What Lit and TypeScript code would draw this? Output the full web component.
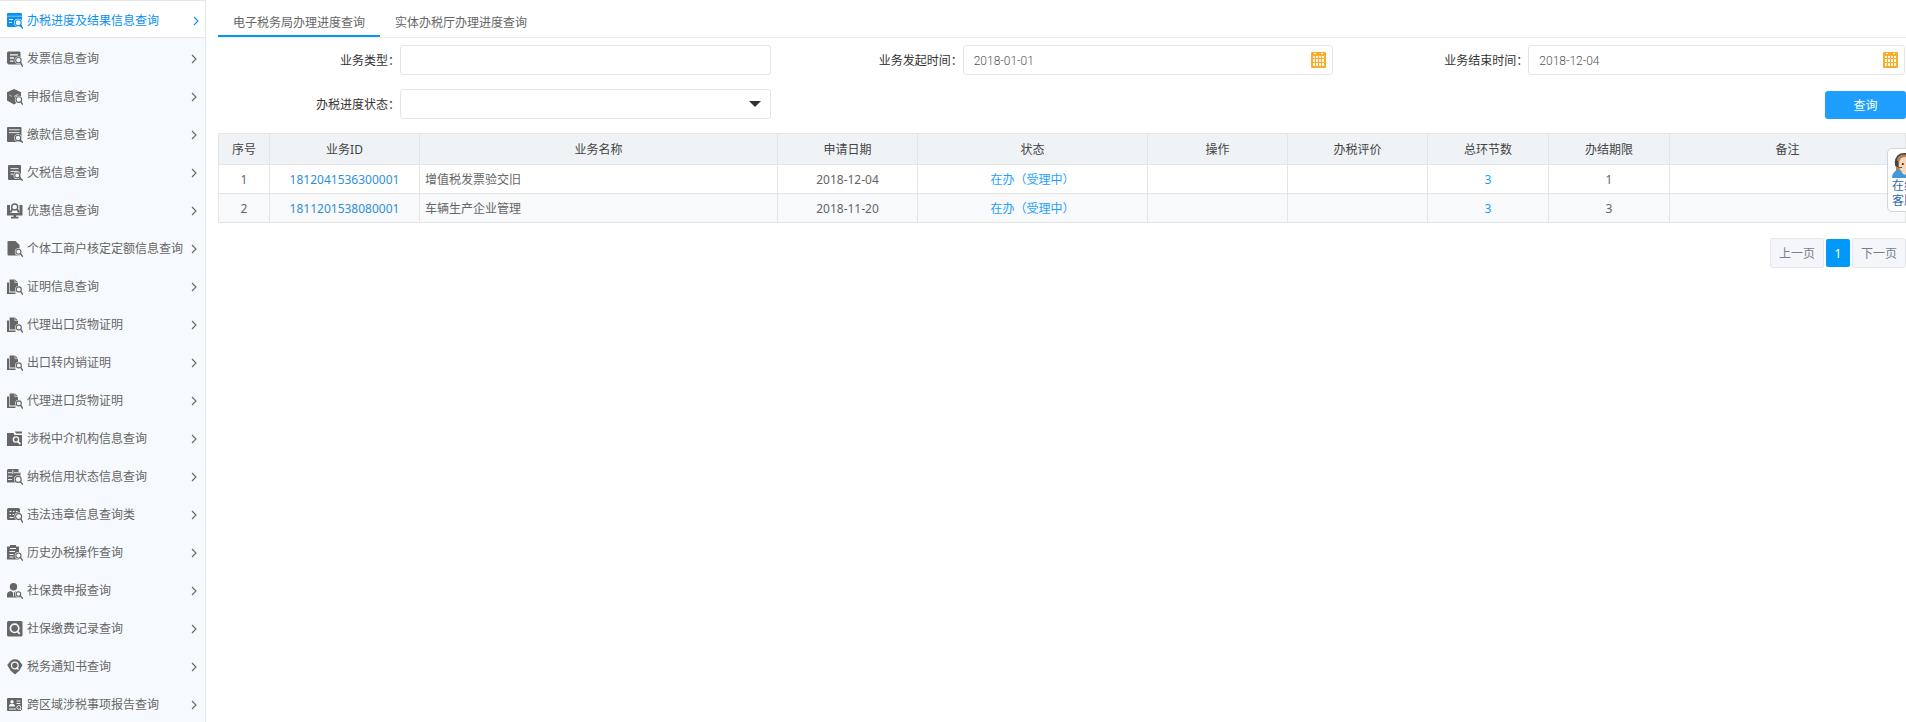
import { LitElement, html, css, svg } from "lit";
import { customElement, state } from "lit/decorators.js";

const lens = (cx: number, cy: number, r: number) => svg`
  <circle cx=${cx} cy=${cy} r=${r + 1.1} fill="var(--cut)"/>
  <circle cx=${cx} cy=${cy} r=${r} fill="var(--cut)" stroke="currentColor" stroke-width="1.1"/>
  <path d="M${cx + r * 0.8} ${cy + r * 0.8}L15.4 15.2" stroke="currentColor" stroke-width="1.4" stroke-linecap="round"/>`;

const copies = svg`
  <path d="M0 3.500h2v10h6.500V15H0z" fill="currentColor"/>
  <path d="M2.600.500h5.400l3 3V12.500H2.600z" fill="currentColor"/>
  <path d="M7.900.500v3.100H11" stroke="var(--cut)" stroke-width=".6" fill="none"/>
  ${lens(11.8, 10.4, 2.5)}`;

const ICONS: Record<string, unknown> = {
  progress: svg`<rect x="0" y="0" width="15" height="14" rx="1" fill="currentColor"/>
    <path d="M0 3.200h15" stroke="var(--cut)" stroke-width=".5"/>
    <path d="M2 6.500h4M2 9.500h3" stroke="var(--cut)" stroke-width="1"/>${lens(11.2, 9.8, 3)}`,
  invoice: svg`<path d="M1 .500h11.500l1 1V13.500H1.500L0 12V1.500z" fill="currentColor"/>
    <path d="M3 3.800h8M3 7h4M3 10.200h3.500" stroke="var(--cut)" stroke-width="1.300"/>${lens(11.4, 9.2, 2.7)}`,
  cube: svg`<path d="M7 0l7 3.200v8L7 15.600 0 11.600V3.200z" fill="currentColor"/>
    <path d="M2.500 6l2 1.400M7 7.500l4.500-2.300" stroke="var(--cut)" stroke-width=".8"/>${lens(11.8, 10.600, 2.8)}`,
  payment: svg`<rect x="0" y="0" width="14.500" height="15" rx="1" fill="currentColor"/>
    <path d="M2 2.800h10.500M2 5.600h10.500" stroke="var(--cut)" stroke-width=".9"/>${lens(11, 11, 2.7)}`,
  arrears: svg`<rect x="1" y="0" width="13" height="15" rx="1" fill="currentColor"/>
    <path d="M3.500 3.600h8M3.500 6.400h8M3.500 9.200h3" stroke="var(--cut)" stroke-width=".9"/>${lens(10.2, 10.4, 2.5)}`,
  benefit: svg`<path d="M0 2h3v8h9.500V2h3v10.500H0z" fill="currentColor"/>
    <circle cx="7.700" cy="4" r="3" fill="var(--cut)" stroke="currentColor" stroke-width="1.400"/>
    <path d="M5.300 6L3.500 9.500M10 6l2 3.500" stroke="currentColor" stroke-width="1.800"/>
    <path d="M6.500 11h2.600v3H6.500zM4 13.800h7.500V15.500H4z" fill="currentColor"/>`,
  household: svg`<path d="M1.500 0H8.500l4 4v10.500H1.500Q.500 14.500.500 13.500V1Q.500 0 1.500 0z" fill="currentColor"/>${lens(11.4, 10.8, 2.5)}`,
  copies,
  agency: svg`<path d="M0 2h6.500l1 2H15v11H0z" fill="currentColor"/>
    <path d="M8 .500h7v2H9z" fill="currentColor"/>
    <circle cx="9" cy="8.500" r="2.600" fill="none" stroke="var(--cut)" stroke-width="1.400"/>
    <path d="M10.800 10.400l2.600 2.700" stroke="var(--cut)" stroke-width="1.700"/>`,
  credit: svg`<path d="M1 0h10.500v3H13.500v10.500H0V1z" fill="currentColor"/>
    <path d="M1 3.700h4M7 3.700h6.500M1 7.200h4.500M1 10.500h4M5.800 1v4" stroke="var(--cut)" stroke-width=".9"/>${lens(11.2, 10.4, 3)}`,
  violation: svg`<rect x="0" y="1" width="13" height="12" rx="1.500" fill="currentColor"/>
    <path d="M2.500 4.500h2M6 4.500h1.500M9 4.500h1.500M2.500 7.500H4M5.500 7.500h1.500M2.500 10.500h4" stroke="var(--cut)" stroke-width="1.200"/>${lens(11.600, 9.600, 3)}`,
  history: svg`<path d="M0 1.500h3V0h6v1.500h3V14.500H0z" fill="currentColor"/>
    <path d="M3 3.500h6M2.500 6.500H8M2.500 9.500h4M2.500 12h4" stroke="var(--cut)" stroke-width="1"/>${lens(11.4, 10.6, 2.6)}`,
  person: svg`<circle cx="6.500" cy="3.700" r="3.700" fill="currentColor"/>
    <path d="M0 14.500V11Q.500 8.600 4 8l2.500 2L9 8q3.500.600 4 3v3.500z" fill="currentColor"/>
    <path d="M6.500 9.500v4" stroke="var(--cut)" stroke-width=".8"/>${lens(11.4, 11, 2.3)}`,
  record: svg`<rect x="0" y="0" width="15.500" height="15.500" rx="1.500" fill="currentColor"/>
    <circle cx="7.600" cy="7.300" r="4.200" fill="none" stroke="var(--cut)" stroke-width="1.700"/>
    <path d="M10.500 10.500l2.200 2.400" stroke="var(--cut)" stroke-width="1.800"/>`,
  notice: svg`<path d="M4 1.500Q8-1 12 1.500L15.500 6l-3 5.500L8 15.600 3.500 11.500.200 6z" fill="currentColor"/>
    <circle cx="7.800" cy="6.500" r="3.300" fill="none" stroke="var(--cut)" stroke-width="1.300"/>
    <path d="M9.500 8.500l2 2" stroke="var(--cut)" stroke-width="1.300"/>`,
  region: svg`<rect x="0" y="1" width="15" height="13" rx="1" fill="currentColor"/>
    <circle cx="5" cy="4.800" r="1.700" fill="var(--cut)"/><path d="M2 9.600q0-2.800 3-2.800t3 2.800z" fill="var(--cut)"/>
    <path d="M9.500 4h3.800M9.500 6.500h3.800M2 12h7" stroke="var(--cut)" stroke-width="1"/>
    <circle cx="11.800" cy="10.400" r="1.900" fill="none" stroke="var(--cut)" stroke-width=".9"/>
    <path d="M13 12l2 2" stroke="var(--cut)"/>`,
};

const MENU: [string, string][] = [
  ["progress", "办税进度及结果信息查询"],
  ["invoice", "发票信息查询"],
  ["cube", "申报信息查询"],
  ["payment", "缴款信息查询"],
  ["arrears", "欠税信息查询"],
  ["benefit", "优惠信息查询"],
  ["household", "个体工商户核定定额信息查询"],
  ["copies", "证明信息查询"],
  ["copies", "代理出口货物证明"],
  ["copies", "出口转内销证明"],
  ["copies", "代理进口货物证明"],
  ["agency", "涉税中介机构信息查询"],
  ["credit", "纳税信用状态信息查询"],
  ["violation", "违法违章信息查询类"],
  ["history", "历史办税操作查询"],
  ["person", "社保费申报查询"],
  ["record", "社保缴费记录查询"],
  ["notice", "税务通知书查询"],
  ["region", "跨区域涉税事项报告查询"],
];

const base = css`
  * { box-sizing: border-box; }
  a { text-decoration: none; color: inherit; }
  button, input, select { font: inherit; color: inherit; margin: 0; }
`;

@customElement("side-menu")
class SideMenu extends LitElement {
  @state() private active = 0;

  static styles = [base, css`
    :host { display: block; background: #f6fafe; border-right: 1px solid #e3e6e9; overflow-y: auto; scrollbar-width: none; }
    .list { list-style: none; margin: 0; padding: 0; }
    .item { display: flex; align-items: center; gap: 4px; height: 38px; padding: 4px 8px 0 7px; color: #666; --cut: #f6fafe; }
    .active { color: #0a8ff5; background: #fff; --cut: #fff; border: solid #e3e6e9; border-width: 1px 0; padding-right: 6px; }
    .glyph { width: 16px; height: 16px; flex: none; }
    .name { flex: 1; white-space: nowrap; }
    .chevron { width: 6px; height: 10px; flex: none; }
  `];

  render() {
    return html`<nav><ul class="list">
      ${MENU.map(([icon, name], i) => html`<li>
        <a href="#" class="item ${i === this.active ? "active" : ""}" @click=${(e: Event) => { e.preventDefault(); this.active = i; }}>
          <svg class="glyph" viewBox="0 0 16 16" aria-hidden="true">${ICONS[icon]}</svg>
          <span class="name">${name}</span>
          <svg class="chevron" viewBox="0 0 6 10" aria-hidden="true"><path d="M1 1l4 4-4 4" fill="none" stroke="currentColor" stroke-width="1.100"/></svg>
        </a></li>`)}
    </ul></nav>`;
  }
}

@customElement("query-form")
class QueryForm extends LitElement {
  static styles = [base, css`
    :host { display: block; color: #333; }
    .form { display: grid; grid-template-columns: repeat(3, 1fr); row-gap: 14px; padding-top: 7px; }
    .field { display: flex; align-items: center; padding-right: 10px; }
    .last { padding: 0 1px 0 3px; }
    .label { width: 182px; text-align: right; flex: none; padding-top: 2px; }
    .box { position: relative; flex: 1; display: flex; }
    .control { width: 100%; height: 30px; border: 1px solid #e5e5e5; border-radius: 3px; background: #fff; padding: 2px 30px 0 10px; color: #888; appearance: none; outline: none; }
    .date { font-family: Roboto, "Noto Sans CJK SC", sans-serif; font-weight: 300; color: #555; }
    .calendar { position: absolute; right: 7px; top: 7px; width: 15px; height: 16px; }
    .arrow { position: absolute; right: 10px; top: 12px; width: 12px; height: 6px; pointer-events: none; }
    .actions { grid-column: 3; display: flex; justify-content: flex-end; align-items: flex-end; }
    .submit { width: 81px; height: 28px; border: 0; border-radius: 3px; background: #1e9fff; color: #fff; padding: 2px 0 0; }
  `];

  private calendar() {
    return html`<svg class="calendar" viewBox="0 0 15 16" aria-hidden="true">
      <rect x="0" y="0" width="15" height="16" rx="1" fill="#fdab2b"/>
      <path d="M3 1.500h2M10 1.500h2" stroke="#fff" stroke-width="1"/>
      <path d="M2 4h2v2H2zM5 4h2v2H5zM8 4h2v2H8zM11 4h2v2h-2zM2 7h2v3H2zM5 7h2v3H5zM8 7h2v3H8zM11 7h2v3h-2zM2 11h2v3H2zM5 11h2v3H5zM8 11h2v3H8zM11 11h2v3h-2z" fill="#fff6e4"/>
    </svg>`;
  }

  render() {
    return html`<form class="form" @submit=${(e: Event) => e.preventDefault()}>
      <div class="field"><label class="label" for="type">业务类型：</label>
        <div class="box"><input class="control" id="type" type="text"></div></div>
      <div class="field"><label class="label" for="start">业务发起时间：</label>
        <div class="box"><input class="control date" id="start" type="text" value="2018-01-01">${this.calendar()}</div></div>
      <div class="field last"><label class="label" for="end">业务结束时间：</label>
        <div class="box"><input class="control date" id="end" type="text" value="2018-12-04">${this.calendar()}</div></div>
      <div class="field"><label class="label" for="status">办税进度状态：</label>
        <div class="box"><select class="control" id="status"><option value=""></option></select>
          <svg class="arrow" viewBox="0 0 12 6" aria-hidden="true"><path d="M0 0h12L6 6z" fill="#333"/></svg></div></div>
      <div class="actions"><button class="submit" type="submit">查询</button></div>
    </form>`;
  }
}

const COLUMNS: [string, string][] = [
  ["no", "序号"], ["id", "业务ID"], ["title", "业务名称"], ["mid", "申请日期"], ["status", "状态"],
  ["mid", "操作"], ["mid", "办税评价"], ["narrow", "总环节数"], ["narrow", "办结期限"], ["note", "备注"],
];

const ROWS = [
  { id: "1812041536300001", name: "增值税发票验交旧", date: "2018-12-04", status: "在办（受理中）", steps: 3, limit: 1 },
  { id: "1811201538080001", name: "车辆生产企业管理", date: "2018-11-20", status: "在办（受理中）", steps: 3, limit: 3 },
];

@customElement("result-table")
class ResultTable extends LitElement {
  static styles = [base, css`
    :host { display: block; }
    .table { width: 100%; table-layout: fixed; border-collapse: collapse; color: #666; }
    .no { width: 51px; } .id { width: 150px; } .mid { width: 140px; }
    .status { width: 230px; } .narrow { width: 121px; } .note { width: 236px; }
    .head { height: 31px; background: #eff3f6; color: #444; font-weight: 400; }
    .head, .cell { border: 1px solid #e5e5e5; padding: 2px 5px 0; text-align: center; }
    .cell { height: 29px; }
    .row:nth-child(even) { background: #f8f9fb; }
    .name { text-align: left; }
    .ref { color: #2f8fd8; }
    .link { color: #1e9fff; }
  `];

  render() {
    return html`<table class="table">
      <thead><tr>${COLUMNS.map(([size, text]) => html`<th class="head ${size}" scope="col">${text}</th>`)}</tr></thead>
      <tbody>${ROWS.map((r, i) => html`<tr class="row">
        <td class="cell">${i + 1}</td>
        <td class="cell"><a class="ref" href="#">${r.id}</a></td>
        <td class="cell name">${r.name}</td>
        <td class="cell">${r.date}</td>
        <td class="cell"><a class="link" href="#">${r.status}</a></td>
        <td class="cell"></td><td class="cell"></td>
        <td class="cell"><a class="link" href="#">${r.steps}</a></td>
        <td class="cell">${r.limit}</td>
        <td class="cell"></td></tr>`)}</tbody>
    </table>`;
  }
}

@customElement("app-root")
class AppRoot extends LitElement {
  @state() private tab = 0;

  static styles = [base, css`
    :host { display: grid; grid-template-columns: 206px minmax(0, 1fr); height: 100vh; overflow: hidden; position: relative; background: #fff;
      font: 12px/18px "Noto Sans", "Noto Sans CJK SC", sans-serif; color: #666; }
    .main { padding-left: 12px; }
    .tabs { display: flex; height: 38px; border-bottom: 1px solid #eee; }
    .tab { border: 0; border-bottom: 2px solid transparent; background: none; padding: 10px 15px 0; color: #666; cursor: pointer; }
    .on { border-bottom-color: #0099f2; }
    .results { margin-top: 14px; }
    .pager { display: flex; justify-content: flex-end; align-items: center; gap: 2px; margin-top: 15px; }
    .page { height: 30px; border: 1px solid #e5e7ea; border-radius: 2px; background: #f5f6f9; color: #76808c; padding: 2px 8px 0; }
    .current { width: 24px; height: 28px; border: 0; background: #0099f7; color: #fff; padding: 2px 0 0; }
    .service { position: absolute; right: -18px; top: 148px; width: 37px; height: 64px; border: 1px solid #ccd6e0; border-radius: 5px; background: #fff;
      padding: 4px; color: #2f69b0; line-height: 15px; display: block; }
    .agent { display: block; width: 25px; height: 25px; }
    .words { display: block; width: 24px; }
  `];

  render() {
    return html`
      <side-menu></side-menu>
      <main class="main">
        <div class="tabs" role="tablist">
          ${["电子税务局办理进度查询", "实体办税厅办理进度查询"].map((t, i) => html`
            <button class="tab ${i === this.tab ? "on" : ""}" role="tab" aria-selected=${i === this.tab} @click=${() => (this.tab = i)}>${t}</button>`)}
        </div>
        <query-form></query-form>
        <result-table class="results"></result-table>
        <nav class="pager">
          <button class="page">上一页</button>
          <button class="page current">1</button>
          <button class="page">下一页</button>
        </nav>
      </main>
      <a class="service" href="#">
        <svg class="agent" viewBox="0 0 25 25" aria-hidden="true">
          <path d="M4 19V9Q4 1 12.500 1T21 9v10z" fill="#b98254"/>
          <path d="M7 10Q8 4 12.500 4T18.500 10v4q-1.500 5-6 5T7 14z" fill="#f8d7b8"/>
          <path d="M0 25q0-7 7-8.500L12.500 22 18 16.500q7 1.500 7 8.500z" fill="#4598d8"/>
          <path d="M8.500 16l4 6 4-6v-1h-8z" fill="#f8d7b8"/>
          <path d="M3.500 10Q4 .800 12.500.800T21.500 10" fill="none" stroke="#444" stroke-width="1.600"/>
          <rect x="3" y="7.500" width="3.400" height="6" rx="1.500" fill="#444"/>
          <rect x="19" y="7.500" width="3.400" height="6" rx="1.500" fill="#444"/>
          <path d="M5 13q2 2.500 5 1.500" fill="none" stroke="#444"/>
          <circle cx="10.800" cy="11" r="1" fill="#222"/><circle cx="15" cy="11" r="1" fill="#222"/>
        </svg>
        <span class="words">在线客服</span>
      </a>`;
  }
}
